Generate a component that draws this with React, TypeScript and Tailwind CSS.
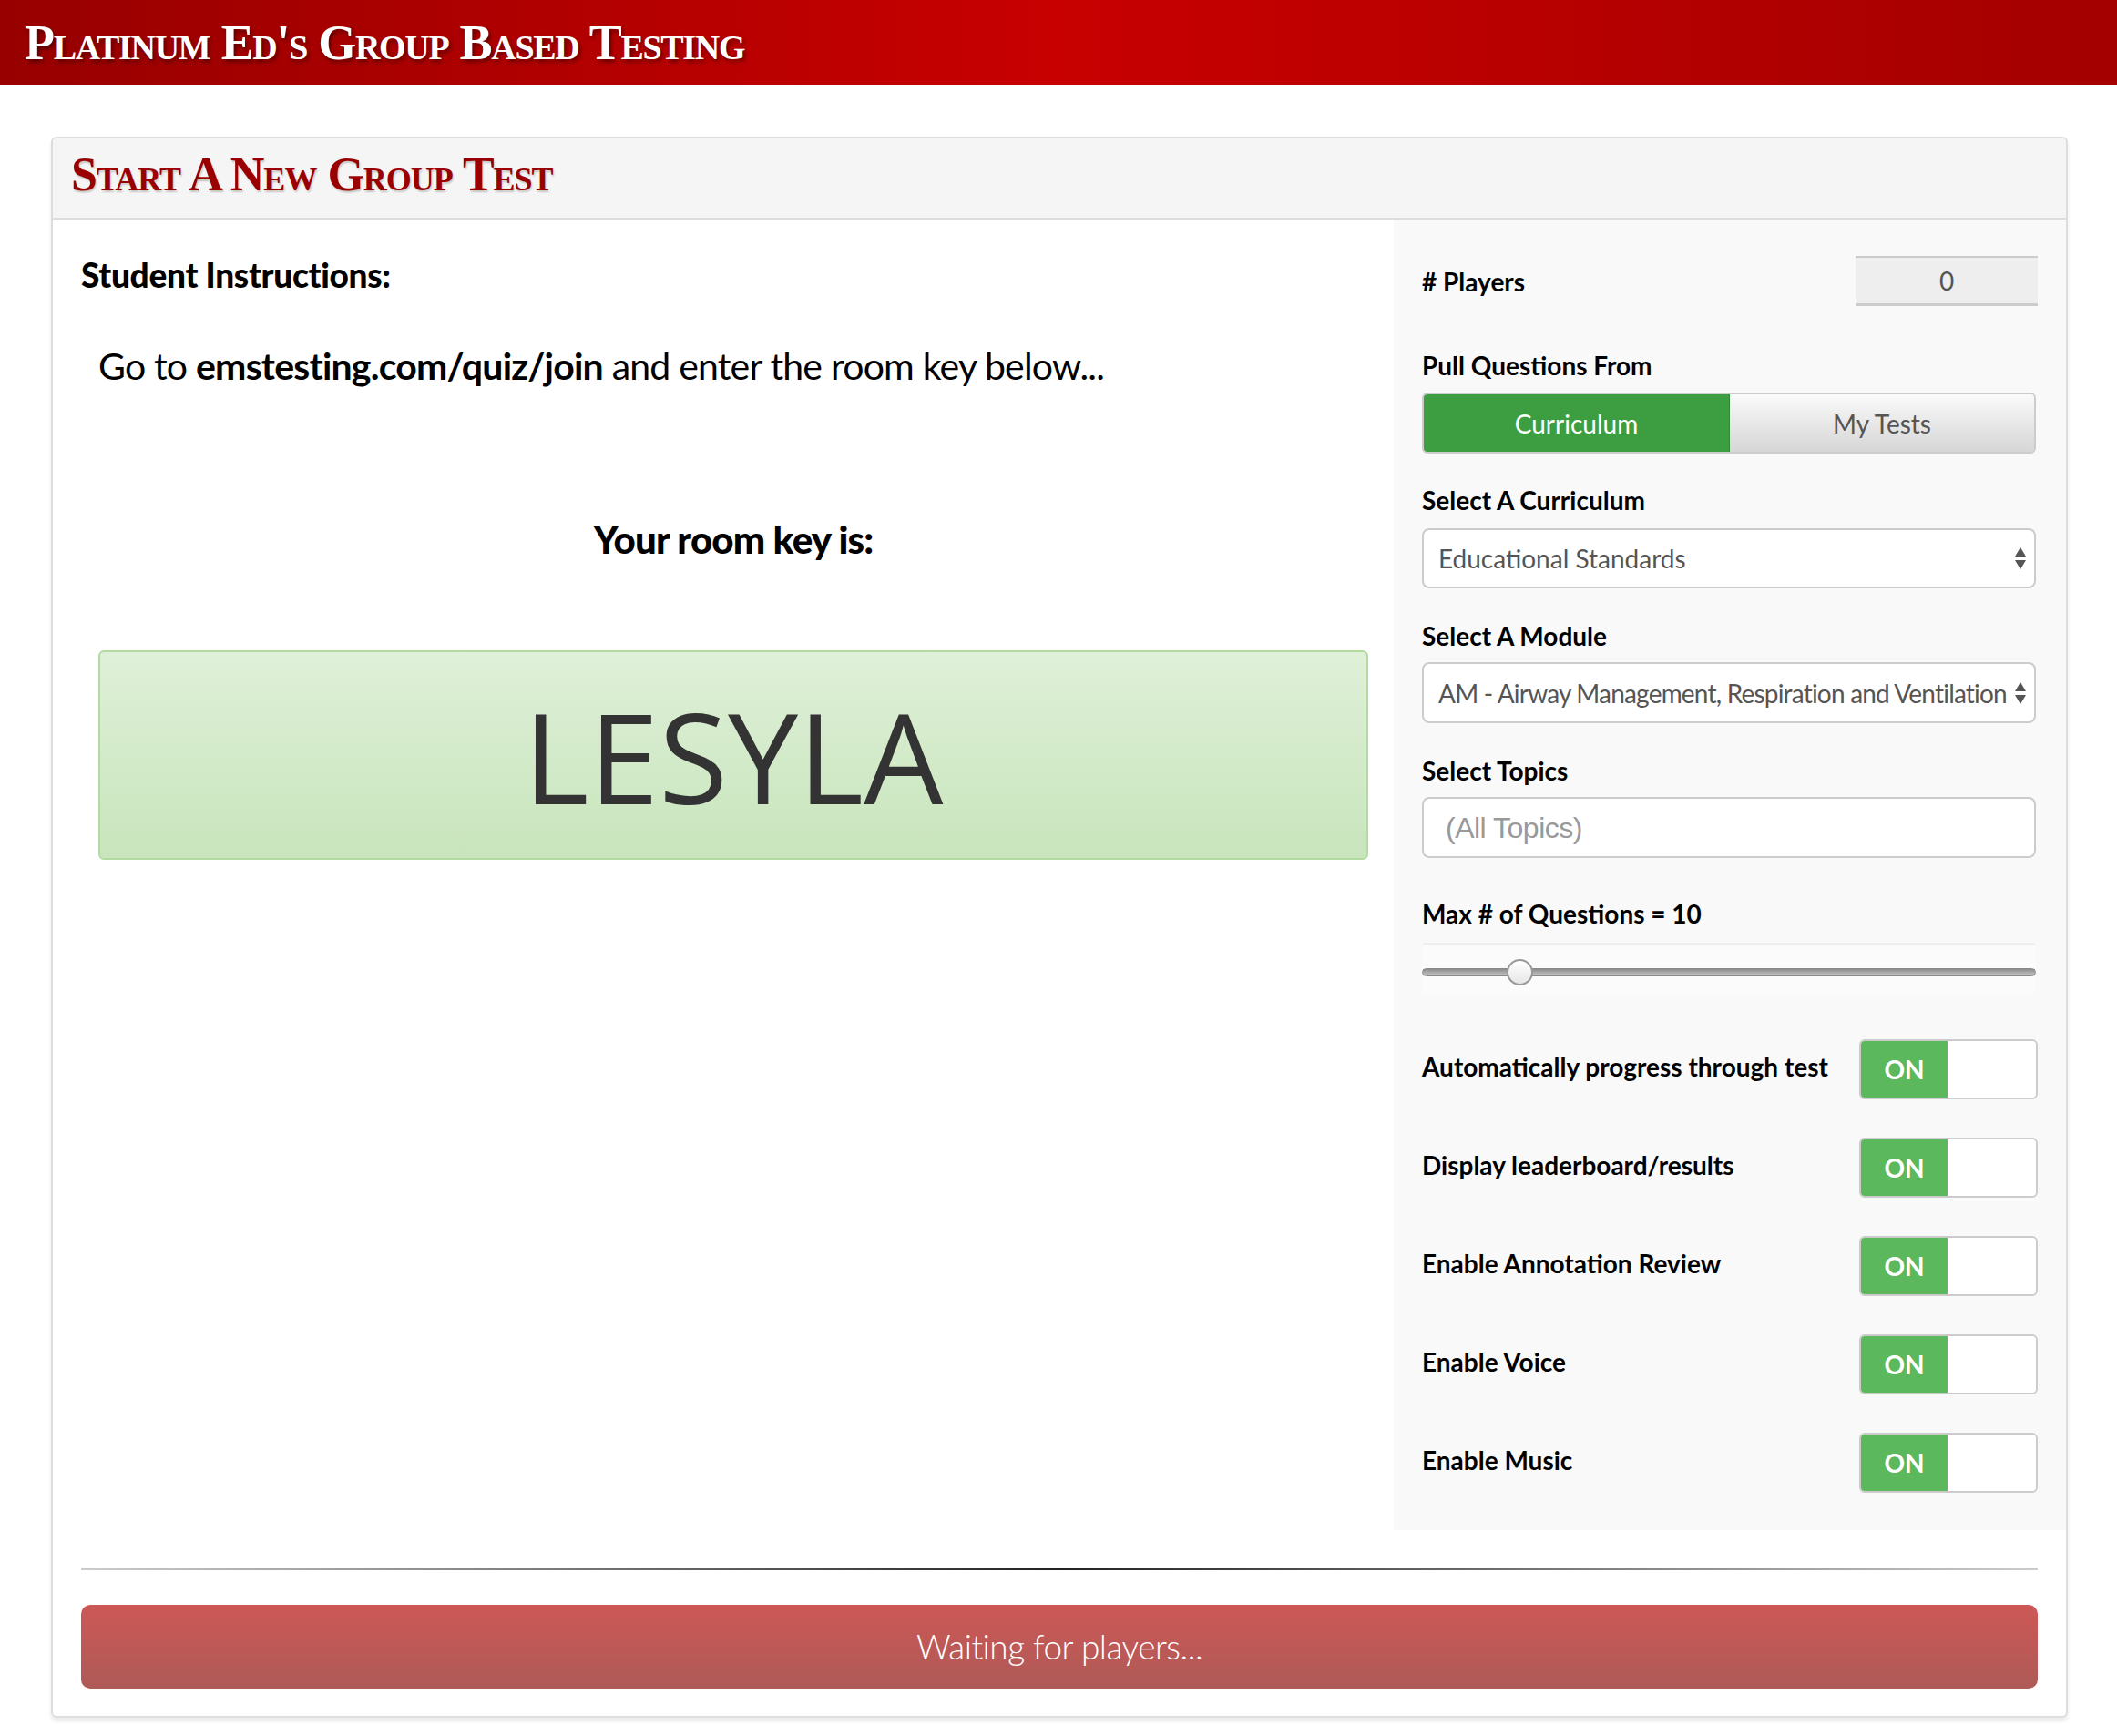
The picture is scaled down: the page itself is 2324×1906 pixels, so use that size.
import React from "react";

const TOGGLES = [
  "Automatically progress through test",
  "Display leaderboard/results",
  "Enable Annotation Review",
  "Enable Voice",
  "Enable Music",
];

function Arrows() {
  return (
    <svg width="14" height="26" viewBox="0 0 14 26" className="shrink-0">
      <path d="M7 1 L13 11 L1 11 Z" fill="#555" />
      <path d="M7 25 L13 15 L1 15 Z" fill="#555" />
    </svg>
  );
}

function FieldLabel({ children, className = "" }: { children: React.ReactNode; className?: string }) {
  return (
    <div className={`text-[28px] leading-[34px] font-bold text-black ${className}`}>{children}</div>
  );
}

function Toggle({ label }: { label: string }) {
  return (
    <div className="flex items-center justify-between mt-[42px] first:mt-0">
      <div className="text-[28px] leading-[34px] font-bold text-black -mt-[6px]">{label}</div>
      <div className="flex h-[66px] w-[196px] overflow-hidden rounded-[6px] border-2 border-[#ccc] bg-white">
        <div className="flex w-[95px] items-center justify-center bg-[#5cb85c] text-[28px] font-bold text-white">
          ON
        </div>
      </div>
    </div>
  );
}

export default function App() {
  return (
    <div className="min-h-[1906px] bg-white font-['Lato','Open_Sans',sans-serif] text-[#333]">
      <header className="flex h-[93px] items-center bg-[linear-gradient(90deg,#980000_0%,#c80000_50%,#a40000_100%)] pl-[27px]">
        <h1 className="font-['Liberation_Serif',serif] text-[54px] font-bold tracking-[-1.3px] text-white [font-variant:small-caps] [text-shadow:2px_3px_4px_rgba(0,0,0,0.45)] leading-none">
          Platinum Ed's Group Based Testing
        </h1>
      </header>

      <div className="pl-[56px] pr-[54px] pt-[57px]">
        <div className="overflow-hidden rounded-[6px] border-2 border-[#ddd] shadow-[0_4px_4px_rgba(0,0,0,0.08)]">
          <div className="flex h-[89px] items-center border-b-2 border-[#ddd] bg-[#f5f5f5] pb-[8px] pl-[20px]">
            <h2 className="font-['Liberation_Serif',serif] text-[52px] font-bold tracking-[-1px] text-[#9a0000] [font-variant:small-caps] [text-shadow:1px_2px_2px_rgba(0,0,0,0.2)] leading-none">
              Start A New Group Test
            </h2>
          </div>

          <div className="flex">
            <div className="flex-1 pl-[31px] pr-[28px] pt-[39px]">
              <div className="text-[37px] leading-[44px] font-black tracking-[-0.3px] text-black">Student Instructions:</div>
              <div className="mt-[52px] pl-[19px] text-[41px] leading-[52px] tracking-[-0.8px] text-black">
                Go to <span className="font-bold">emstesting.com/quiz/join</span> and enter the room key below...
              </div>
              <div className="ml-[19px] mt-[139px] text-center text-[42px] leading-[50px] font-black tracking-[-0.8px] text-black">
                Your room key is:
              </div>
              <div className="ml-[19px] mt-[97px] flex h-[230px] items-center justify-center rounded-[6px] border-2 border-[#b2dba1] bg-[linear-gradient(180deg,#dff0d8_0%,#c8e5bc_100%)]">
                <span className="font-['Open_Sans',sans-serif] text-[138px] font-normal leading-none tracking-[0px] text-[#333]">
                  LESYLA
                </span>
              </div>
            </div>

            <div className="w-[738px] shrink-0 bg-[#f9f9f9] px-[31px] pb-[41px] pt-[40px]">
              <div className="flex items-center justify-between">
                <FieldLabel>
                  # Players
                </FieldLabel>
                <div className="flex h-[55px] w-[200px] items-center justify-center border-t-2 border-b-[3px] border-[#ccc] bg-[#eee] text-[28px] text-[#555]">
                  0
                </div>
              </div>

              <FieldLabel className="mt-[48px]">Pull Questions From</FieldLabel>
              <div className="mt-[13px] flex h-[67px] w-[674px] overflow-hidden rounded-[6px] border-2 border-[#ccc] text-[28px]">
                <div className="flex w-[336px] items-center justify-center border-r border-[#2e8a33] bg-[#3c9e41] text-white">
                  Curriculum
                </div>
                <div className="flex flex-1 items-center justify-center bg-[linear-gradient(180deg,#fafafa_0%,#d6d6d6_100%)] text-[#555]">
                  My Tests
                </div>
              </div>

              <FieldLabel className="mt-[34px]">Select A Curriculum</FieldLabel>
              <div className="mt-[14px] flex h-[66px] w-[674px] items-center justify-between rounded-[8px] border-2 border-[#ccc] bg-white pl-[16px] pr-[8px] text-[28px] text-[#555]">
                <span>Educational Standards</span>
                <Arrows />
              </div>

              <FieldLabel className="mt-[35px]">Select A Module</FieldLabel>
              <div className="mt-[12px] flex h-[67px] w-[674px] items-center justify-between gap-[4px] rounded-[8px] border-2 border-[#ccc] bg-white pl-[16px] pr-[8px] text-[28px] text-[#555]">
                <span className="tracking-[-0.8px] whitespace-nowrap">AM - Airway Management, Respiration and Ventilation</span>
                <Arrows />
              </div>

              <FieldLabel className="mt-[35px]">Select Topics</FieldLabel>
              <div className="mt-[12px] flex h-[67px] w-[674px] items-center rounded-[8px] border-2 border-[#ccc] bg-white pl-[24px] font-['Liberation_Sans',sans-serif] text-[32px] tracking-[-0.5px] text-[#999]">
                (All Topics)
              </div>

              <FieldLabel className="mt-[44px]">Max # of Questions = 10</FieldLabel>
              <div className="relative mt-[15px] h-[56px] w-[674px] rounded-[4px] border-t-2 border-[#eee] bg-[#fbfbfb]">
                <div className="absolute left-0 right-0 top-[26px] h-[9px] rounded-full border border-[#888] bg-[linear-gradient(180deg,#8c8c8c_0%,#c4c4c4_100%)]" />
                <div className="absolute left-[93px] top-[16px] h-[29px] w-[29px] rounded-full border-2 border-[#999] bg-[linear-gradient(180deg,#ffffff_0%,#e6e6e6_100%)]" />
              </div>

              <div className="mt-[50px]">
                {TOGGLES.map((t) => (
                  <Toggle key={t} label={t} />
                ))}
              </div>
            </div>
          </div>

          <div className="px-[31px] pb-[30px] pt-[41px]">
            <div className="h-[3px] bg-[linear-gradient(90deg,#ccc_0%,#222_50%,#ccc_100%)]" />
            <div className="mt-[38px] flex h-[92px] items-center justify-center rounded-[10px] bg-[linear-gradient(180deg,#cd5856_0%,#ae5a57_100%)] text-[37px] font-light tracking-[-0.5px] text-white">
              Waiting for players...
            </div>
          </div>
        </div>
      </div>
    </div>
  );
}
